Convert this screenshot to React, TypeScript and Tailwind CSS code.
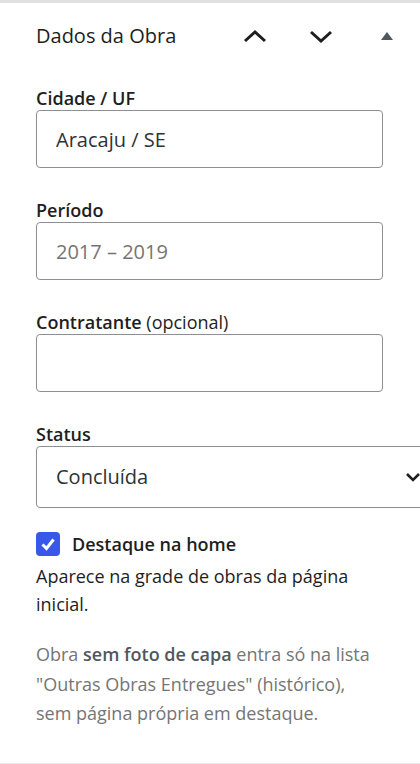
import React from "react";

const font = { fontFamily: '"Open Sans", "Noto Sans", sans-serif' };

function Chevron({ up }: { up?: boolean }) {
  return (
    <svg width="24" height="24" viewBox="0 0 24 24" fill="none">
      <path
        d={up ? "M2 17 L12 8 L22 17" : "M2 8 L12 17 L22 8"}
        stroke="#1e1e1e"
        strokeWidth="3"
      />
    </svg>
  );
}

function Field({ label, extra, value, placeholder }: { label: string; extra?: string; value?: string; placeholder?: string }) {
  return (
    <div className="flex flex-col">
      <label className="text-[18px] leading-[24px] text-[#1e1e1e]">
        <span className="font-semibold">{label}</span>
        {extra && <span> {extra}</span>}
      </label>
      <input
        readOnly
        value={value ?? ""}
        placeholder={placeholder}
        style={font}
        className="h-[58px] w-[347px] rounded-[4px] border border-[#8c8f94] bg-white px-[19px] text-[20px] text-[#2c3338] placeholder:text-[#757575] outline-none"
      />
    </div>
  );
}

export default function App() {
  return (
    <div style={font} className="h-[764px] w-[420px] overflow-hidden bg-white border-t-[3px] border-b border-t-[#e0e0e0] border-b-[#ececec]">
      {/* header */}
      <div className="flex h-[66px] items-center pl-9">
        <h2 className="text-[20px] font-medium text-[#1e1e1e]">Dados da Obra</h2>
        <div className="ml-auto flex">
          <button className="flex h-[48px] w-[66px] items-center justify-center">
            <Chevron up />
          </button>
          <button className="flex h-[48px] w-[66px] items-center justify-center">
            <Chevron />
          </button>
          <button className="flex h-[48px] w-[66px] items-center justify-center">
            <svg width="12" height="8" viewBox="0 0 12 8">
              <path d="M6 0 L12 8 L0 8 Z" fill="#50575e" />
            </svg>
          </button>
        </div>
      </div>

      <div className="flex flex-col gap-[30px] px-9 pt-[17px]">
        <Field label="Cidade / UF" value="Aracaju / SE" />
        <Field label="Período" placeholder="2017 – 2019" />
        <Field label="Contratante" extra="(opcional)" />

        <div className="flex flex-col">
          <label className="text-[18px] font-semibold leading-[24px] text-[#1e1e1e]">Status</label>
          <div className="flex h-[62px] w-[396px] items-center justify-between rounded-[4px] border border-[#8c8f94] pl-[19px] pr-[11px] text-[20px] text-[#2c3338]">
            <span>Concluída</span>
            <svg width="14" height="10" viewBox="0 0 14 10" fill="none">
              <path d="M1 2 L7 8 L13 2" stroke="#1e1e1e" strokeWidth="2.5" />
            </svg>
          </div>
        </div>
      </div>

      <div className="px-9 pt-[24px]">
        <div className="flex h-6 items-center gap-3">
          <span className="flex h-6 w-6 items-center justify-center rounded-[4px] bg-[#3858e9]">
            <svg width="18" height="18" viewBox="0 0 18 18" fill="none">
              <path d="M3.5 9.5 L7.5 13.5 L14.5 4.5" stroke="white" strokeWidth="3" />
            </svg>
          </span>
          <span className="text-[18px] font-semibold text-[#1e1e1e]">Destaque na home</span>
        </div>
        <p className="mt-[6px] text-[18px] leading-[28px] text-[#1e1e1e]">
          Aparece na grade de obras da página inicial.
        </p>
        <p className="mt-[22px] text-[18px] leading-[29.5px] text-[#757575]">
          Obra <strong className="font-semibold text-[#50575e]">sem foto de capa</strong> entra só na lista "Outras Obras Entregues" (histórico), sem página própria em destaque.
        </p>
      </div>
    </div>
  );
}
